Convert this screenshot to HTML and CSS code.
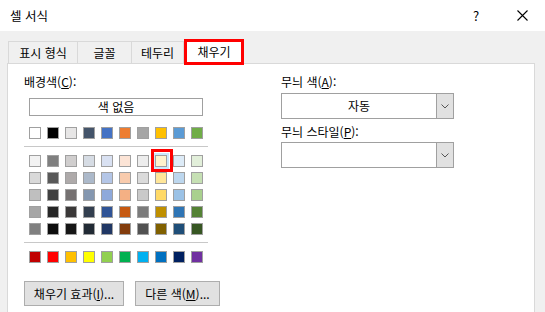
FILE: index.html
```html
<!DOCTYPE html>
<html lang="ko">
	<head>
		<meta charset="UTF-8">
		<title>셀 서식</title>
		<link rel="stylesheet" href="styles.css">
	</head>
	<body>
		<div class="dialog">
			<div class="titlebar">
				<span class="title">셀 서식</span>
				<span class="help">?</span>
				<span class="close">
					<svg width="11" height="11" viewBox="0 0 11 11"><path d="M0.5 0.5L10.5 10.5M10.5 0.5L0.5 10.5" stroke="#000" stroke-width="1.1" fill="none"/></svg>
				</span>
			</div>

			<ul class="tabs">
				<li class="t1">표시 형식</li>
				<li class="t2">글꼴</li>
				<li class="t3">테두리</li>
				<li class="on">채우기</li>
			</ul>

			<div class="panel">
				<div class="cols">
					<!--배경색-->
					<div class="left">
						<p class="label">배경색(<u>C</u>):</p>
						<div class="nocolor">색 없음</div>
						<div class="row" id="theme"></div>
						<div class="sep"></div>
						<div class="grid" id="tints"></div>
						<div class="sep"></div>
						<div class="row" id="std"></div>
					</div>
					<!--무늬-->
					<div class="right">
						<p class="label">무늬 색(<u>A</u>):</p>
						<div class="combo first">
							<span class="val">자동</span>
							<span class="arrow"><svg width="8" height="5" viewBox="0 0 8 5"><path d="M0.5 0.5L4 4L7.5 0.5" stroke="#555" fill="none"/></svg></span>
						</div>
						<p class="label lbl2">무늬 스타일(<u>P</u>):</p>
						<div class="combo second">
							<span class="val"></span>
							<span class="arrow"><svg width="8" height="5" viewBox="0 0 8 5"><path d="M0.5 0.5L4 4L7.5 0.5" stroke="#555" fill="none"/></svg></span>
						</div>
					</div>
				</div>
				<div class="btns">
					<p class="btn b1">채우기 효과(<u>I</u>)...</p>
					<p class="btn b2">다른 색(<u>M</u>)...</p>
				</div>
			</div>
		</div>

		<script>
			var theme = ['#ffffff', '#000000', '#e7e6e6', '#44546a', '#4472c4', '#ed7d31', '#a5a5a5', '#ffc000', '#5b9bd5', '#70ad47'];
			var tints = [
				['#f2f2f2', '#7f7f7f', '#d0cece', '#d6dce4', '#d9e1f2', '#fce4d6', '#ededed', '#fff2cc', '#ddebf7', '#e2efda'],
				['#d9d9d9', '#595959', '#aeaaaa', '#acb9ca', '#b4c6e7', '#f8cbad', '#dbdbdb', '#ffe699', '#bdd7ee', '#c6e0b4'],
				['#bfbfbf', '#404040', '#757171', '#8497b0', '#8ea9db', '#f4b084', '#c9c9c9', '#ffd966', '#9bc2e6', '#a9d08e'],
				['#a6a6a6', '#262626', '#3a3838', '#333f4f', '#305496', '#c65911', '#7b7b7b', '#bf8f00', '#2f75b5', '#548235'],
				['#808080', '#0d0d0d', '#161616', '#222b35', '#203764', '#833c0c', '#525252', '#806000', '#1f4e78', '#375623']
			];
			var std = ['#c00000', '#ff0000', '#ffc000', '#ffff00', '#92d050', '#00b050', '#00b0f0', '#0070c0', '#002060', '#7030a0'];

			// 색 칸 만들기
			function fill(box, colors) {
				for(var i = 0; i < colors.length; i++) {
					var s = document.createElement('span');
					s.className = 'sw';
					s.style.background = colors[i];
					box.appendChild(s);
				}
				return box;
			}

			fill(document.getElementById('theme'), theme);
			fill(document.getElementById('std'), std);

			var grid = document.getElementById('tints');
			for(var r = 0; r < tints.length; r++) {
				var row = document.createElement('div');
				row.className = 'row';
				grid.appendChild(fill(row, tints[r]));
			}
			grid.children[0].children[7].className += ' sel';
		</script>
	</body>
</html>
```

FILE: styles.css
```css
*, *:before, *:after {
	margin: 0;
	padding: 0;
	box-sizing: border-box;
}

ul, li {
	list-style: none;
}

body {
	width: 545px;
	height: 312px;
	overflow: hidden;
	background: #f0f0f0;
	font-family: "Noto Sans CJK KR", "Noto Sans", sans-serif;
	font-size: 12px;
	color: #000;
}

u {
	text-decoration: underline;
	text-underline-offset: 1px;
}

/*제목 표시줄*/
.titlebar {
	height: 31px;
	background: #fff;
	display: flex;
	align-items: center;
	padding-left: 10px;
}

.titlebar .title {
	flex: 1;
	font-size: 12.5px;
}

.titlebar .help, .titlebar .close {
	width: 46px;
	height: 31px;
	display: flex;
	align-items: center;
	justify-content: center;
}

.titlebar .help {
	font-size: 13px;
}

/*탭*/
.tabs {
	display: flex;
	align-items: flex-end;
	padding-left: 8px;
	margin-top: 8px;
	height: 26px;
	margin-bottom: -2px;
	position: relative;
	z-index: 1;
}

.tabs li {
	height: 22px;
	margin-bottom: 2px;
	line-height: 21px;
	text-align: center;
	border-top: 1px solid #d9d9d9;
	border-left: 1px solid #d9d9d9;
	background: #f0f0f0;
}

.tabs .t1 {
	width: 69px;
}

.tabs .t2 {
	width: 54px;
}

.tabs .t3 {
	width: 53px;
	border-right: 1px solid #d9d9d9;
}

.tabs .on {
	width: 60px;
	height: 26px;
	margin-bottom: 0;
	line-height: 20px;
	background: #fff;
	border: 3px solid #ff0000;
}

/*내용*/
.panel {
	margin-left: 7px;
	width: 528px;
	height: 249px;
	background: #fff;
	border: 1px solid #d9d9d9;
	border-bottom: none;
	padding: 10px 0 0 16px;
}

.cols {
	display: flex;
}

.left {
	width: 184px;
}

.right {
	margin-left: 73px;
	width: 173px;
}

.label {
	height: 16px;
	line-height: 16px;
}

.nocolor {
	margin: 8px 0 0 5px;
	width: 174px;
	height: 18px;
	line-height: 16px;
	text-align: center;
	border: 1px solid #a0a0a0;
}

.row {
	display: flex;
	gap: 6px;
	padding-left: 5px;
}

.left > .row {
	margin-top: 11px;
}

.left > .row:last-child {
	margin-top: 8px;
}

.sep {
	height: 1px;
	margin-top: 7px;
	background: #c8c8c8;
}

.grid {
	margin-top: 8px;
	display: flex;
	flex-direction: column;
	gap: 5px;
}

.sw {
	width: 12px;
	height: 12px;
	border: 1px solid #a0a0a0;
	display: block;
}

.sw.sel {
	position: relative;
	box-shadow: 0 0 0 2px #cde8fb;
}

.sw.sel:after {
	content: '';
	position: absolute;
	left: -5px;
	top: -7px;
	width: 22px;
	height: 23px;
	border: 3px solid #ff0000;
}

/*콤보 상자*/
.combo {
	height: 26px;
	border: 1px solid #a0a0a0;
	display: flex;
	background: #fff;
}

.combo.first {
	margin-top: 3px;
}

.combo.second {
	margin-top: 2px;
}

.combo .val {
	flex: 1;
	text-align: center;
	line-height: 24px;
}

.combo .arrow {
	width: 17px;
	border-left: 1px solid #a0a0a0;
	background: #e1e1e1;
	display: flex;
	align-items: center;
	justify-content: center;
}

.lbl2 {
	margin-top: 5px;
}

/*버튼*/
.btns {
	display: flex;
	margin-top: 18px;
}

.btn {
	height: 25px;
	line-height: 23px;
	text-align: center;
	background: #e1e1e1;
	border: 1px solid #adadad;
}

.b1 {
	width: 100px;
}

.b2 {
	width: 85px;
	margin-left: 11px;
}
```
